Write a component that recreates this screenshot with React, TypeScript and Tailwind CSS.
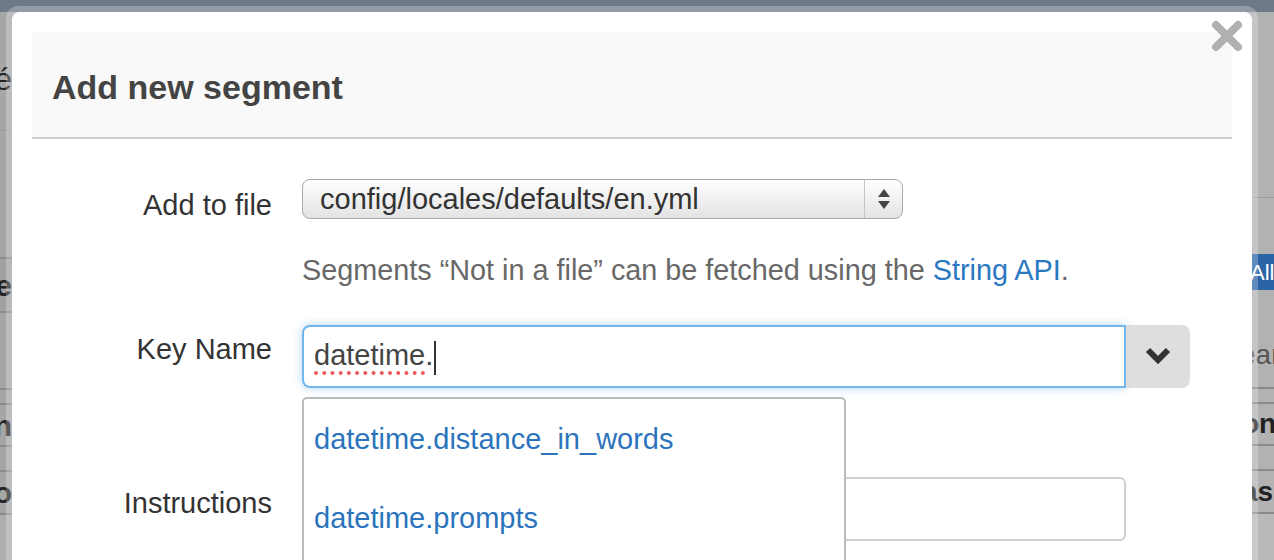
import React from 'react';

const font = { fontFamily: '"Liberation Sans", Arial, Helvetica, sans-serif' };

function Line({ className = '' }: { className?: string }) {
  return <div className={`h-[2px] bg-[#8a8a8a] ${className}`} />;
}

// dimmed page content peeking out left and right of the modal
function LeftStrip() {
  return (
    <div className="w-[12px] h-full overflow-hidden flex flex-col bg-[#a6a6a6] text-[#222]">
      <div className="h-[12px] bg-[#6d7987] shrink-0" />
      <div className="h-[50px] shrink-0" />
      <div className="h-[34px] flex justify-end items-center text-[32px] leading-none shrink-0">
        <span className="whitespace-nowrap">é</span>
      </div>
      <div className="h-[34px] shrink-0" />
      <div className="h-[1px] bg-[#9a9a9a] shrink-0" />
      <div className="h-[126px] shrink-0" />
      <Line />
      <div className="h-[52px] flex justify-end items-center font-bold text-[30px] bg-[#a0a0a0] shrink-0">
        <span className="whitespace-nowrap">e</span>
      </div>
      <Line />
      <div className="h-[75px] shrink-0" />
      <Line />
      <div className="h-[13px] shrink-0" />
      <Line />
      <div className="h-[40px] flex justify-end items-center font-bold text-[30px] shrink-0">
        <span className="whitespace-nowrap">n</span>
      </div>
      <Line />
      <div className="h-[23px] shrink-0" />
      <Line />
      <div className="h-[41px] flex justify-end items-center font-bold text-[30px] shrink-0">
        <span className="whitespace-nowrap">do</span>
      </div>
      <Line />
      <div className="flex-1 bg-[#adadad]" />
    </div>
  );
}

function RightStrip() {
  return (
    <div className="w-[22px] h-full overflow-hidden flex flex-col bg-[#b2b2b2] text-[#222]">
      <div className="h-[12px] bg-[#6d7987] shrink-0" />
      <div className="h-[185px] shrink-0" />
      <div className="h-[1px] bg-[#9c9c9c] shrink-0" />
      <div className="h-[56px] shrink-0" />
      <div className="h-[36px] bg-[#2b64a6] text-white text-[22px] flex items-center shrink-0">
        <span className="whitespace-nowrap -ml-[2px]">All</span>
      </div>
      <div className="h-[50px] shrink-0" />
      <div className="h-[30px] flex items-center text-[28px] text-[#555] shrink-0">
        <span className="whitespace-nowrap -ml-[12px]">ear</span>
      </div>
      <div className="h-[17px] shrink-0" />
      <Line />
      <div className="h-[13px] shrink-0" />
      <Line />
      <div className="h-[40px] flex items-center font-bold text-[28px] shrink-0">
        <span className="whitespace-nowrap -ml-[10px]">on</span>
      </div>
      <Line />
      <div className="h-[23px] shrink-0" />
      <Line />
      <div className="h-[41px] flex items-center font-bold text-[28px] shrink-0">
        <span className="whitespace-nowrap -ml-[10px]">as</span>
      </div>
      <Line />
      <div className="flex-1 bg-[#b9b9b9]" />
    </div>
  );
}

function SelectArrows() {
  return (
    <svg width="14" height="22" viewBox="0 0 14 22">
      <path d="M7 1 L13 9 L1 9 Z" fill="#444" />
      <path d="M7 21 L13 13 L1 13 Z" fill="#444" />
    </svg>
  );
}

function Chevron() {
  return (
    <svg width="26" height="18" viewBox="0 0 26 18">
      <polyline points="3,3 13,13 23,3" fill="none" stroke="#333" strokeWidth="6" />
    </svg>
  );
}

function CloseX() {
  return (
    <svg width="32" height="32" viewBox="0 0 32 32">
      <path d="M5 5 L27 27 M27 5 L5 27" stroke="#b0b0b0" strokeWidth="8" strokeLinecap="round" />
    </svg>
  );
}

function Label({ children, pt }: { children: React.ReactNode; pt: string }) {
  return <div className={`w-[240px] shrink-0 text-right text-[29px] text-[#333] leading-none ${pt}`}>{children}</div>;
}

export default function App() {
  return (
    <div className="relative w-[1274px] h-[560px] overflow-hidden bg-[#a8a8a8] flex" style={font}>
      <LeftStrip />
      <div className="flex-1 flex flex-col">
        <div className="h-[12px] bg-[#6d7987]" />
        <div className="flex-1 bg-[#aaaaaa]" />
      </div>
      <RightStrip />

      {/* modal */}
      <div className="absolute left-[6px] top-[6px] w-[1252px] h-[600px] rounded-tl-[12px] rounded-tr-[12px] border-[6px] border-white/25 bg-clip-padding">
        <div className="relative w-full h-full bg-white rounded-tl-[7px] rounded-tr-[7px] px-[20px] pt-[20px]">
          <div className="absolute right-[9px] top-[8px]">
            <CloseX />
          </div>

          <div className="h-[107px] bg-[#f9f9f9] border-b-2 border-[#d0d0d0] flex items-center pl-[20px]">
            <h3 className="text-[34px] font-bold text-[#444] leading-none mt-[4px]">Add new segment</h3>
          </div>

          <div className="pt-[40px]">
            {/* Add to file */}
            <div className="flex items-start gap-[30px]">
              <Label pt="pt-[12px]">Add to file</Label>
              <div className="w-[601px] h-[40px] rounded-[8px] border border-[#aaa] bg-gradient-to-b from-white to-[#e3e3e3] flex items-center">
                <div className="flex-1 pl-[17px] text-[29px] text-[#333] leading-none">config/locales/defaults/en.yml</div>
                <div className="w-[38px] h-full border-l border-[#c4c4c4] flex items-center justify-center">
                  <SelectArrows />
                </div>
              </div>
            </div>

            <div className="pl-[270px] mt-[36px] text-[28.8px] text-[#686868] leading-none">
              Segments “Not in a file” can be fetched using the{' '}
              <span className="text-[#2a78c2]">String API</span>.
            </div>

            {/* Key Name */}
            <div className="relative flex items-start gap-[30px] mt-[40px]">
              <Label pt="pt-[10px]">Key Name</Label>
              <div className="flex">
                <div className="w-[824px] h-[63px] rounded-l-[8px] border-2 border-[#72b6ee] shadow-[0_0_10px_rgba(82,168,236,0.45)] bg-white flex items-center pl-[10px] pt-[4px]">
                  <span className="text-[29px] text-[#444] leading-none border-b-[4px] border-dotted border-[#f25a5a] pb-[1px]">datetime</span>
                  <span className="text-[29px] text-[#444] leading-none pb-[5px]">.</span>
                  <span className="w-[2px] h-[34px] bg-[#333] ml-[1px]" />
                </div>
                <div className="w-[64px] h-[63px] rounded-r-[8px] bg-[#dedede] flex items-center justify-center">
                  <Chevron />
                </div>
              </div>

              {/* autocomplete list */}
              <div className="absolute left-[270px] top-[72px] z-10 w-[544px] h-[200px] rounded-t-[5px] border-2 border-[#bbb] bg-white">
                <div className="h-[80px] flex items-center pl-[10px] pt-[2px] text-[29px] text-[#2b74bd] leading-none">datetime.distance_in_words</div>
                <div className="h-[80px] flex items-center pl-[10px] text-[29px] text-[#2b74bd] leading-none">datetime.prompts</div>
              </div>
            </div>

            {/* Instructions */}
            <div className="flex items-start gap-[30px] mt-[89px]">
              <Label pt="pt-[12px]">Instructions</Label>
              <div className="w-[824px] h-[64px] rounded-[6px] border-2 border-[#cfcfcf] bg-white" />
            </div>
          </div>
        </div>
      </div>
    </div>
  );
}
